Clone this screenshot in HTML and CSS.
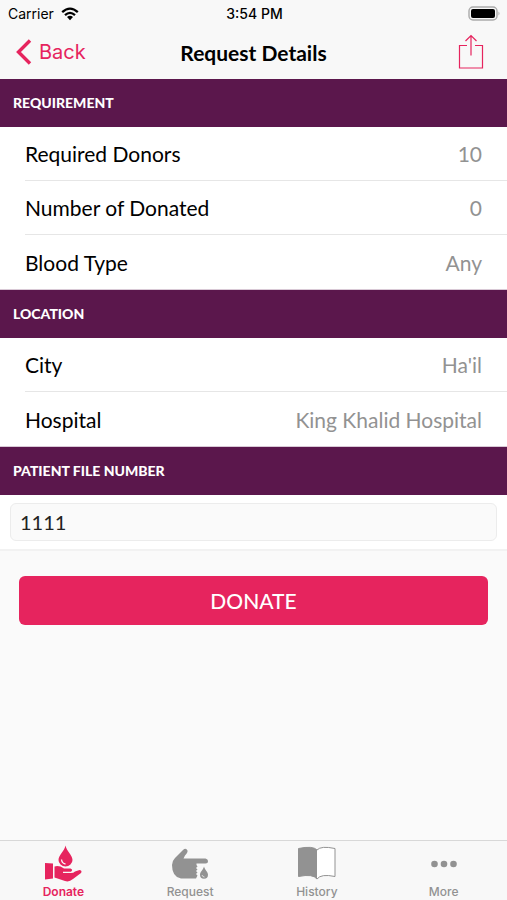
FILE: index.html
```
<!DOCTYPE html>
<html lang="en">
    <head>
        <meta charset="utf-8">
        <title>Request Details</title>
        <meta name="viewport" content="width=device-width, initial-scale=1.0">
        <link rel="stylesheet" href="styles.css">
    </head>
    <body>
        <div class="status_bar">
            <div class="carrier">
                <span>Carrier</span>
                <svg width="18" height="14" viewBox="0 0 18 14">
                    <path d="M1.2 5.2Q9 -2 16.8 5.2M4 8.1Q9 3.6 14 8.1" fill="none" stroke="#000" stroke-width="2.3"/>
                    <path d="M6 10.1Q9 7.6 12 10.1L9 13.2Z"/>
                </svg>
            </div>
            <span class="clock">3:54 PM</span>
            <div class="battery">
                <svg width="33" height="15" viewBox="0 0 33 15">
                    <rect x="1" y="1" width="28" height="13" rx="4" fill="none" stroke="#aaa" stroke-width="1.4"/>
                    <rect x="3" y="3" width="24" height="9" rx="2"/>
                    <path d="M30.5 5.5Q32.5 7.5 30.5 9.5Z" fill="#aaa"/>
                </svg>
            </div>
        </div>

        <header class="nav_bar">
            <button class="back_button" type="button">
                <svg width="16" height="26" viewBox="0 0 16 26">
                    <path d="M14 1.5L2.5 13L14 24.5" fill="none" stroke="currentColor" stroke-width="3.4"/>
                </svg>
                Back
            </button>
            <h1>Request Details</h1>
            <button class="share_button" type="button" aria-label="Share">
                <svg width="26" height="36" viewBox="0 0 26 36">
                    <path d="M9 11.5H1.5V34H24.5V11.5H17M13 21.5V2M7.5 7L13 1.5L18.5 7" fill="none" stroke="currentColor" stroke-width="1.2"/>
                </svg>
            </button>
        </header>

        <main>
            <h2>REQUIREMENT</h2>
            <dl>
                <div class="row"><dt>Required Donors</dt><dd>10</dd></div>
                <div class="row"><dt>Number of Donated</dt><dd>0</dd></div>
                <div class="row"><dt>Blood Type</dt><dd>Any</dd></div>
            </dl>
            <h2>LOCATION</h2>
            <dl>
                <div class="row"><dt>City</dt><dd>Ha'il</dd></div>
                <div class="row"><dt>Hospital</dt><dd>King Khalid Hospital</dd></div>
            </dl>
            <h2><label for="file_number">PATIENT FILE NUMBER</label></h2>
            <div class="file_row">
                <input id="file_number" type="text" value="1111">
            </div>
            <button class="donate_button" type="button">DONATE</button>
        </main>

        <nav class="tab_bar">
            <a class="tab active" href="#donate">
                <svg width="38" height="38" viewBox="0 0 38 38" fill="currentColor">
                    <path d="M21.500 .5C22.500 6 28.500 10 28.500 15A7 6.500 0 0 1 14.500 15C14.500 10 20.500 6 21.500 .5Z"/>
                    <path d="M17.500 14.500Q18 18.500 21.500 19" fill="none" stroke="#f8f8f8" stroke-width="1.300"/>
                    <path d="M1 18L9 18.500V33.500L1 34.500Z"/>
                    <path d="M10.500 21.500Q15 20 20 23.500H26.500Q29.500 24.500 27 26.800L19 26.800V28H27Q29.500 28 31 26.500L35.500 25Q38.500 25.500 37 28L29 34Q25 37.500 21 36L10.500 32.500Z"/>
                </svg>
                Donate
            </a>
            <a class="tab" href="#request">
                <svg width="38" height="38" viewBox="0 0 38 38" fill="currentColor">
                    <path d="M1 20Q1 16 4 13L12 5Q15 2.500 16.500 5.500Q17 7.500 14 10.500L12.500 13.500H34.500Q37 14 37 16Q37 18.500 34.500 18.500H25.500V20L26.500 21.500L25 23L26.500 24.500L25 26L26.500 27.500L25 29L26.500 30.500L25 33.500H10Q1 32 1 20Z"/>
                    <path d="M33 21.500C34 25 37 27 37 29.800A4 4 0 0 1 29 29.800C29 27 32 25 33 21.500Z"/>
                    <path d="M31 30Q31.500 32 33.500 32" fill="none" stroke="#f8f8f8" stroke-width=".7"/>
                </svg>
                Request
            </a>
            <a class="tab" href="#history">
                <svg width="38" height="38" viewBox="0 0 38 38">
                    <path d="M19 5Q23 .5 37 3.500V31.500Q23 28.500 19 34Z" fill="#fff"/>
                    <path d="M.5 3.500Q15 .5 19 5V34Q15 28.500 .5 31.500Z" fill="currentColor"/>
                    <path d="M19 5Q23 .5 37 3.500V31.500Q23 28.500 19 34Q15 28.500 .5 31.500V3.500Q15 .5 19 5Z" fill="none" stroke="currentColor"/>
                </svg>
                History
            </a>
            <a class="tab" href="#more">
                <svg width="38" height="38" viewBox="0 0 38 38" fill="currentColor">
                    <circle cx="9.500" cy="19" r="3.300"/>
                    <circle cx="19" cy="19" r="3.300"/>
                    <circle cx="28.500" cy="19" r="3.300"/>
                </svg>
                More
            </a>
        </nav>
    </body>
</html>
```
FILE: styles.css
```
* {
    box-sizing: border-box;
}
body {
    margin: 0;
    min-height: 100vh;
    display: flex; flex-direction: column;
    background: #fafafa;
    color: #000; font-family: Lato, "Open Sans", sans-serif; font-size: 21px;
}
button {
    padding: 0; border: 0;
    background: none;
    color: #e6245e; font-family: inherit;
    cursor: pointer;
}
svg {
    display: block;
}
.status_bar {
    display: grid; grid-template-columns: 1fr auto 1fr; align-items: center;
    height: 27px; padding: 0 6px 0 8px;
    background: #f8f8f8;
    font-family: Inter, Roboto, sans-serif; font-size: 14px;
}
.carrier {
    display: flex; align-items: center; gap: 7px;
}
.clock {
    font-weight: 500;
}
.battery {
    justify-self: end;
}
.nav_bar {
    display: grid; grid-template-columns: 1fr auto 1fr; align-items: center;
    height: 52px; padding: 0 16px 2px;
    background: #f8f8f8;
}
.nav_bar h1 {
    margin: 0;
    font-size: 21px; font-weight: 700;
}
.back_button {
    justify-self: start;
    display: flex; align-items: center; gap: 7px;
    font-family: Inter, Roboto, sans-serif; font-size: 20px;
}
.share_button {
    justify-self: end;
    display: flex; justify-content: center;
    width: 40px;
}
main {
    flex: 1;
}
h2 {
    height: 48px; margin: 0; padding: 0 13px;
    background: #5b174c;
    color: #fff; font-size: 14px; font-weight: 900; line-height: 48px;
}
dl {
    margin: 0; padding-left: 25px;
    border-bottom: 1px solid #d9c9d6;
    background: #fff;
}
.row {
    display: flex; align-items: center; justify-content: space-between;
    height: 54px; padding-right: 25px;
    border-bottom: 1px solid #e6e6e6;
}
.row:last-child {
    border-bottom: 0;
}
dd {
    margin: 0;
    color: #929292;
}
.file_row {
    padding: 8px 10px;
    border-bottom: 2px solid #f2f2f2;
    background: #fff;
}
.file_row input {
    display: block;
    width: 100%; height: 38px; padding: 0 9px;
    border: 1px solid #ececec; border-radius: 6px;
    background: #fafafa;
    color: #222; font-family: inherit; font-size: 20px;
}
.donate_button {
    display: block;
    width: calc(100% - 38px); height: 49px; margin: 25px auto;
    border-radius: 6px;
    background: #e6245e;
    color: #fff; font-size: 21px; font-weight: 500;
}
.tab_bar {
    display: grid; grid-template-columns: repeat(4, 1fr);
    height: 60px; padding-top: 4px;
    border-top: 1px solid #d8d8d8;
    background: #f8f8f8;
}
.tab {
    display: flex; flex-direction: column; align-items: center; gap: 1px;
    color: #929292; font-family: Inter, Roboto, sans-serif; font-size: 12px; font-weight: 500; line-height: 16px;
    text-decoration: none;
}
.tab.active {
    color: #e6245e;
    font-weight: 600;
}
```
